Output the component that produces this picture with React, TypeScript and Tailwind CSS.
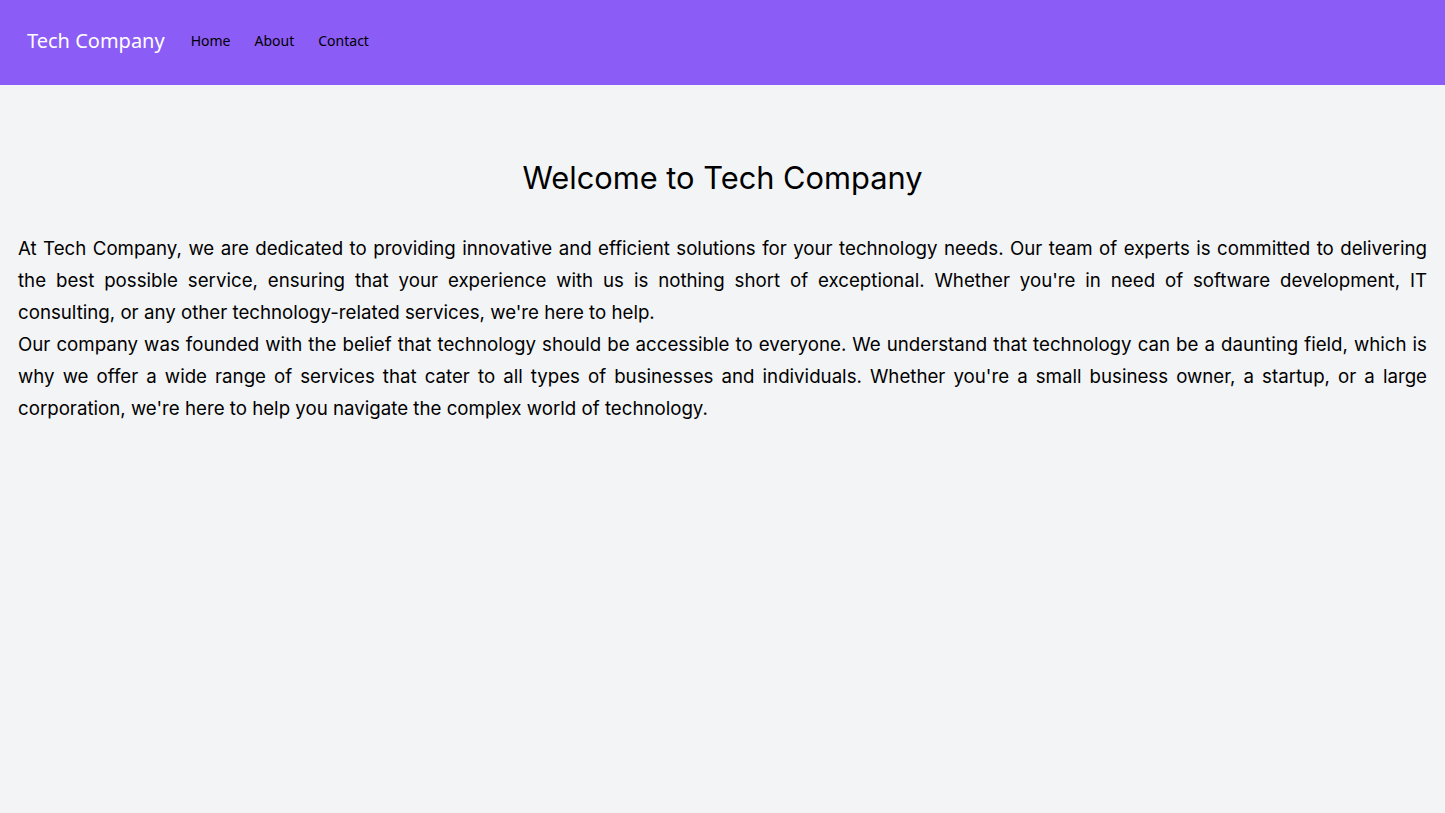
import React from "react";

export default function App() {
  return (
    <div className="min-h-screen bg-[#f3f4f6] text-black font-['Inter',sans-serif]">
      <nav className="flex h-[85px] items-center bg-[#8b5cf6] px-[27px] pb-1 font-['Noto_Sans',sans-serif]">
        <span className="mr-[26px] text-xl text-white">Tech Company</span>
        <div className="flex gap-6 text-sm">
          <a href="#">Home</a>
          <a href="#">About</a>
          <a href="#">Contact</a>
        </div>
      </nav>
      <main className="px-[18px] pt-[75px]">
        <h1 className="mb-[37px] text-center text-[30.8px] leading-9">Welcome to Tech Company</h1>
        <p className="text-justify text-[18.7px] leading-8">
          At Tech Company, we are dedicated to providing innovative and efficient solutions for your technology needs. Our team of experts is committed to delivering the best possible service, ensuring that your experience with us is nothing short of exceptional. Whether you're in need of software development, IT consulting, or any other technology-related services, we're here to help.
        </p>
        <p className="text-justify text-[18.7px] leading-8">
          Our company was founded with the belief that technology should be accessible to everyone. We understand that technology can be a daunting field, which is why we offer a wide range of services that cater to all types of businesses and individuals. Whether you're a small business owner, a startup, or a large corporation, we're here to help you navigate the complex world of technology.
        </p>
      </main>
    </div>
  );
}
